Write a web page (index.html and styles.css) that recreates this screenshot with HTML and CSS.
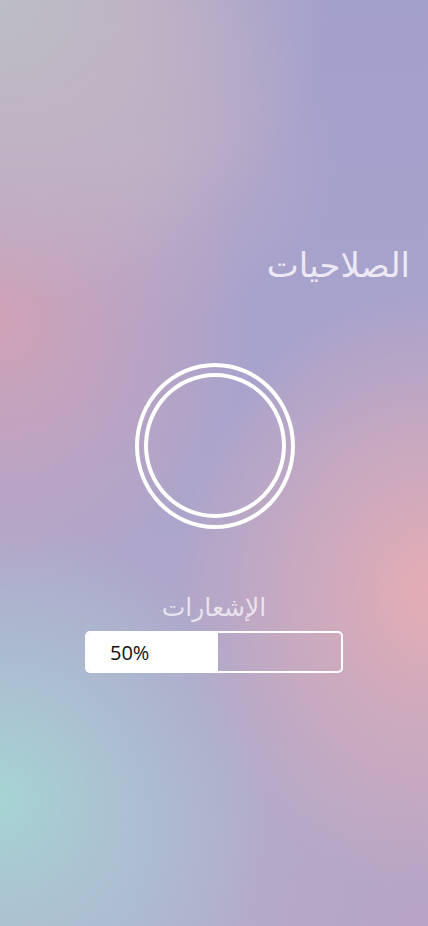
FILE: index.html
```html
<!DOCTYPE html>
<html lang="ar">
<head>
<meta charset="utf-8">
<meta name="viewport" content="width=device-width, initial-scale=1">
<title>الصلاحيات</title>
<link rel="stylesheet" href="styles.css">
</head>
<body>
<main class="screen" dir="rtl">
  <h1 class="title">الصلاحيات</h1>
  <div class="rings"><div class="ring-inner"></div></div>
  <section class="perm">
    <div class="perm-label">الإشعارات</div>
    <div class="bar" dir="ltr">
      <div class="bar-fill" style="width:51.5%"><span class="bar-text">50%</span></div>
    </div>
  </section>
</main>
</body>
</html>
```
FILE: styles.css
```css
html, body {
  margin: 0;
  padding: 0;
}
body {
  width: 428px;
  height: 926px;
  overflow: hidden;
}
.screen {
  box-sizing: border-box;
  width: 428px;
  height: 926px;
  padding-top: 240px;
  display: flex;
  flex-direction: column;
  align-items: center;
  background-color: #aaa4cc;
  background-image:
    radial-gradient(ellipse 330px 300px at 0px 0px, rgba(188, 189, 197, 1) 0%, rgba(194, 182, 196, 0.85) 45%, rgba(194, 180, 196, 0) 100%),
    radial-gradient(ellipse 200px 180px at 140px 150px, rgba(198, 176, 196, 0.7) 0%, rgba(198, 176, 196, 0) 100%),
    radial-gradient(ellipse 250px 270px at 0px 320px, rgba(208, 162, 182, 1) 0%, rgba(206, 164, 186, 0.6) 45%, rgba(204, 166, 190, 0) 100%),
    radial-gradient(ellipse 270px 280px at 0px 800px, rgba(166, 212, 212, 1) 0%, rgba(168, 204, 212, 0.65) 45%, rgba(170, 190, 210, 0) 100%),
    radial-gradient(ellipse 250px 300px at 428px 590px, rgba(228, 172, 180, 1) 0%, rgba(224, 172, 182, 0.6) 45%, rgba(220, 172, 186, 0) 100%),
    radial-gradient(ellipse 300px 220px at 428px 926px, rgba(184, 164, 196, 1) 0%, rgba(184, 164, 196, 0) 100%),
    radial-gradient(ellipse 260px 200px at 200px 926px, rgba(176, 178, 206, 0.9) 0%, rgba(176, 178, 206, 0) 100%),
    linear-gradient(180deg, #a4a0cc 0%, #a8a3cc 40%, #aea6cb 60%, #b4aac8 100%);
  font-family: "DejaVu Sans", "Noto Sans", sans-serif;
}
.title {
  align-self: stretch;
  margin: 0;
  padding-right: 18px;
  text-align: right;
  font-size: 34px;
  font-weight: 400;
  line-height: 50px;
  color: rgba(246, 244, 250, 0.9);
}
.rings {
  box-sizing: border-box;
  width: 160px;
  height: 166px;
  margin-top: 73px;
  margin-left: 2px;
  border: 4px solid #fff;
  border-radius: 50%;
  padding: 6px 5px 7px 5px;
  display: flex;
}
.ring-inner {
  flex: 1;
  border: 4px solid #fff;
  border-radius: 50%;
}
.perm {
  margin-top: 61px;
  display: flex;
  flex-direction: column;
  align-items: center;
}
.perm-label {
  font-size: 25px;
  line-height: 36px;
  color: rgba(244, 240, 246, 0.85);
}
.bar {
  box-sizing: border-box;
  width: 258px;
  height: 42px;
  margin-top: 5px;
  border: 2px solid #fff;
  border-radius: 5px;
  display: flex;
  overflow: hidden;
}
.bar-fill {
  background: #fff;
  display: flex;
  align-items: center;
  padding-left: 23px;
  box-sizing: border-box;
}
.bar-text {
  font-family: "Open Sans", "Liberation Sans", sans-serif;
  font-size: 20px;
  color: #111;
}
```
